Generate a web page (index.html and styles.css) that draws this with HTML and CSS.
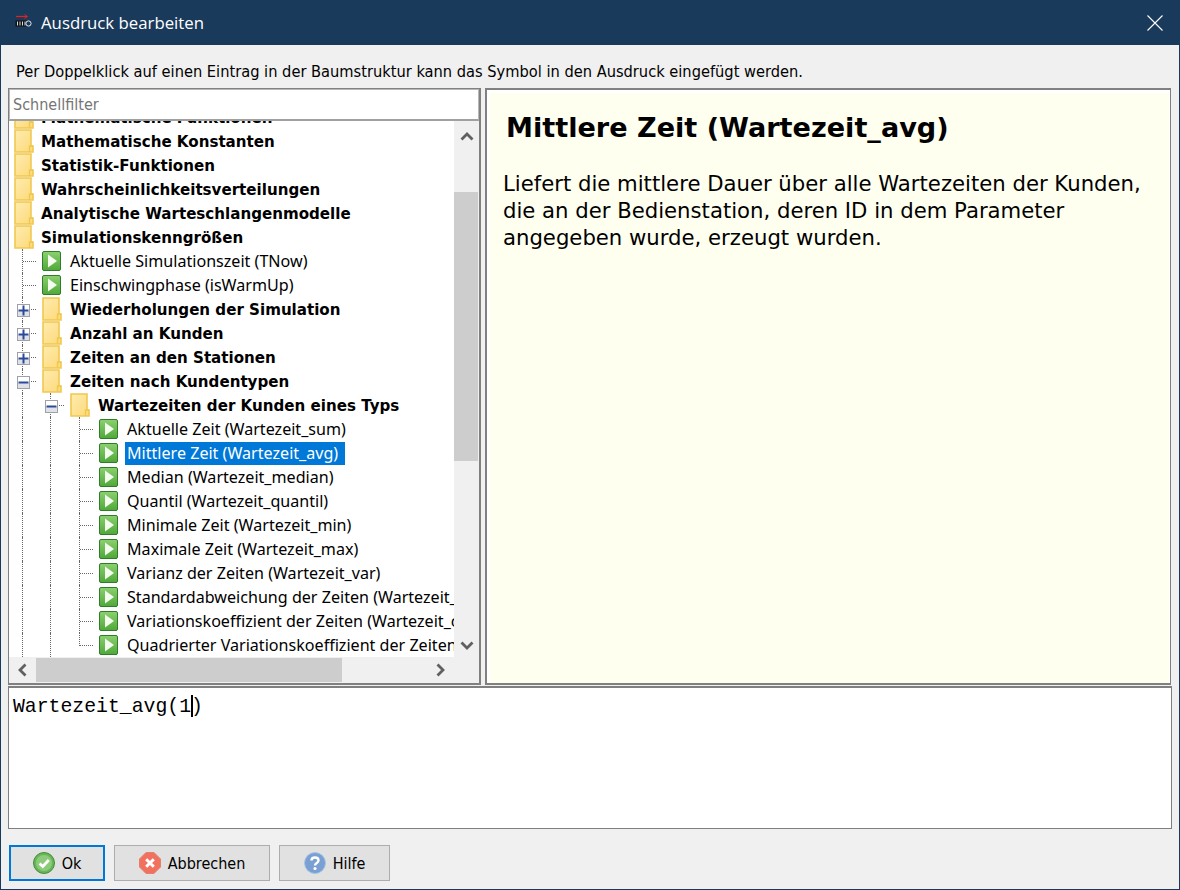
FILE: index.html
```html
<!DOCTYPE html>
<html lang="de">
<head>
    <meta charset="utf-8" />
    <title>Ausdruck bearbeiten</title>
    <link rel="stylesheet" href="styles.css">
</head>
<body>
    <svg class="defs" width="0" height="0">
        <defs>
            <linearGradient id="gelb" x1="0" y1="0" x2="1" y2="1">
                <stop offset="0" stop-color="#feecb0"/>
                <stop offset="1" stop-color="#fdd978"/>
            </linearGradient>
            <linearGradient id="gruen" x1="0" y1="0" x2="0" y2="1">
                <stop offset="0" stop-color="#8cd070"/>
                <stop offset="1" stop-color="#4fa838"/>
            </linearGradient>
            <symbol id="ordner" viewBox="0 0 20 24">
                <path d="M1 1H17V17H19V23H1Z" fill="url(#gelb)" stroke="#f0c850" stroke-width="1.6"/>
                <path d="M15.500 23V17H19" fill="none" stroke="#f0c850" stroke-width="1.4"/>
            </symbol>
            <symbol id="start" viewBox="0 0 20 20">
                <rect x="0.500" y="0.500" width="18" height="19" rx="1.500" fill="url(#gruen)" stroke="#2f7d2a"/>
                <path d="M6 3.500L15 10L6 16.500Z" fill="#f4fbef"/>
            </symbol>
            <symbol id="plus" viewBox="0 0 13 13">
                <rect x="0.500" y="0.500" width="12" height="12" fill="#fff" stroke="#a0a0a8"/>
                <rect x="1" y="7" width="11" height="5" fill="#dfe1e6"/>
                <path d="M1.500 6.500H11.500M6.500 1.500V11.500" stroke="#2b4a9a" stroke-width="2"/>
            </symbol>
            <symbol id="minus" viewBox="0 0 13 13">
                <rect x="0.500" y="0.500" width="12" height="12" fill="#fff" stroke="#a0a0a8"/>
                <rect x="1" y="7" width="11" height="5" fill="#dfe1e6"/>
                <path d="M1.500 6.500H11.500" stroke="#2b4a9a" stroke-width="2"/>
            </symbol>
        </defs>
    </svg>

    <div class="titel">
        <svg class="titel-icon" width="17" height="14" viewBox="0 0 17 14">
            <path d="M1 2.500H12" stroke="#e8201c" stroke-width="1.200"/>
            <path d="M9.500 0.500L12.500 2.500L9.500 4.500" fill="none" stroke="#e8201c"/>
            <path d="M0.500 6.500H11.500V12.500H0.500Z" fill="#111"/>
            <path d="M2.500 7.500V11.500M5 7.500V11.500M7.500 7.500V11.500M10 7.500V11.500" fill="none" stroke="#d8dde4"/>
            <circle cx="13.500" cy="9.500" r="2.600" fill="#1a3a5c" stroke="#e4e7ea"/>
        </svg>
        <span class="titel-text">Ausdruck bearbeiten</span>
        <svg class="schliessen" width="16" height="16" viewBox="0 0 16 16">
            <path d="M0.500 0.500L15.500 15.500M15.500 0.500L0.500 15.500" stroke="#fff" stroke-width="1.100"/>
        </svg>
    </div>

    <div class="hinweis">Per Doppelklick auf einen Eintrag in der Baumstruktur kann das Symbol in den Ausdruck eingefügt werden.</div>

    <div class="haupt">
        <div class="links">
            <div class="filter">Schnellfilter</div>
            <div class="baum-bereich">
                <div class="baum">
                    <div class="zeile wurzel"><svg class="ordner"><use href="#ordner"/></svg><span class="fett">Mathematische Funktionen</span></div>
                    <div class="zeile wurzel"><svg class="ordner"><use href="#ordner"/></svg><span class="fett">Mathematische Konstanten</span></div>
                    <div class="zeile wurzel"><svg class="ordner"><use href="#ordner"/></svg><span class="fett">Statistik-Funktionen</span></div>
                    <div class="zeile wurzel"><svg class="ordner"><use href="#ordner"/></svg><span class="fett">Wahrscheinlichkeitsverteilungen</span></div>
                    <div class="zeile wurzel"><svg class="ordner"><use href="#ordner"/></svg><span class="fett">Analytische Warteschlangenmodelle</span></div>
                    <div class="zeile wurzel"><svg class="ordner"><use href="#ordner"/></svg><span class="fett">Simulationskenngrößen</span></div>

                    <div class="zeile"><span class="ast"></span><svg class="start"><use href="#start"/></svg><span class="eintrag">Aktuelle Simulationszeit (TNow)</span></div>
                    <div class="zeile"><span class="ast"></span><svg class="start"><use href="#start"/></svg><span class="eintrag">Einschwingphase (isWarmUp)</span></div>
                    <div class="zeile"><span class="ast"><svg class="knoten"><use href="#plus"/></svg></span><svg class="ordner"><use href="#ordner"/></svg><span class="fett">Wiederholungen der Simulation</span></div>
                    <div class="zeile"><span class="ast"><svg class="knoten"><use href="#plus"/></svg></span><svg class="ordner"><use href="#ordner"/></svg><span class="fett">Anzahl an Kunden</span></div>
                    <div class="zeile"><span class="ast"><svg class="knoten"><use href="#plus"/></svg></span><svg class="ordner"><use href="#ordner"/></svg><span class="fett">Zeiten an den Stationen</span></div>
                    <div class="zeile"><span class="ast"><svg class="knoten"><use href="#minus"/></svg></span><svg class="ordner"><use href="#ordner"/></svg><span class="fett">Zeiten nach Kundentypen</span></div>

                    <div class="zeile"><span class="linie"></span><span class="ast"><svg class="knoten"><use href="#minus"/></svg></span><svg class="ordner"><use href="#ordner"/></svg><span class="fett">Wartezeiten der Kunden eines Typs</span></div>

                    <div class="zeile"><span class="linie"></span><span class="linie"></span><span class="ast"></span><svg class="start"><use href="#start"/></svg><span class="eintrag">Aktuelle Zeit (Wartezeit_sum)</span></div>
                    <div class="zeile"><span class="linie"></span><span class="linie"></span><span class="ast"></span><svg class="start"><use href="#start"/></svg><span class="eintrag aktiv">Mittlere Zeit (Wartezeit_avg)</span></div>
                    <div class="zeile"><span class="linie"></span><span class="linie"></span><span class="ast"></span><svg class="start"><use href="#start"/></svg><span class="eintrag">Median (Wartezeit_median)</span></div>
                    <div class="zeile"><span class="linie"></span><span class="linie"></span><span class="ast"></span><svg class="start"><use href="#start"/></svg><span class="eintrag">Quantil (Wartezeit_quantil)</span></div>
                    <div class="zeile"><span class="linie"></span><span class="linie"></span><span class="ast"></span><svg class="start"><use href="#start"/></svg><span class="eintrag">Minimale Zeit (Wartezeit_min)</span></div>
                    <div class="zeile"><span class="linie"></span><span class="linie"></span><span class="ast"></span><svg class="start"><use href="#start"/></svg><span class="eintrag">Maximale Zeit (Wartezeit_max)</span></div>
                    <div class="zeile"><span class="linie"></span><span class="linie"></span><span class="ast"></span><svg class="start"><use href="#start"/></svg><span class="eintrag">Varianz der Zeiten (Wartezeit_var)</span></div>
                    <div class="zeile"><span class="linie"></span><span class="linie"></span><span class="ast"></span><svg class="start"><use href="#start"/></svg><span class="eintrag">Standardabweichung der Zeiten (Wartezeit_std)</span></div>
                    <div class="zeile"><span class="linie"></span><span class="linie"></span><span class="ast"></span><svg class="start"><use href="#start"/></svg><span class="eintrag">Variationskoeffizient der Zeiten (Wartezeit_cv)</span></div>
                    <div class="zeile"><span class="linie"></span><span class="linie"></span><span class="ast ende"></span><svg class="start"><use href="#start"/></svg><span class="eintrag">Quadrierter Variationskoeffizient der Zeiten (Wartezeit_scv)</span></div>
                </div>
                <div class="vbar">
                    <div class="pfeil-v"><svg width="14" height="9" viewBox="0 0 14 9"><path d="M1.500 7.500L7 2L12.500 7.500" fill="none" stroke="#606060" stroke-width="2.800"/></svg></div>
                    <div class="vbar-griff"></div>
                    <div class="pfeil-v unten"><svg width="14" height="9" viewBox="0 0 14 9"><path d="M1.500 1.500L7 7L12.500 1.500" fill="none" stroke="#606060" stroke-width="2.800"/></svg></div>
                </div>
            </div>
            <div class="hbar">
                <div class="pfeil-h"><svg width="9" height="14" viewBox="0 0 9 14"><path d="M7.500 1.500L2 7L7.500 12.500" fill="none" stroke="#606060" stroke-width="2.800"/></svg></div>
                <div class="hbar-griff"></div>
                <div class="pfeil-h rechts"><svg width="9" height="14" viewBox="0 0 9 14"><path d="M1.500 1.500L7 7L1.500 12.500" fill="none" stroke="#606060" stroke-width="2.800"/></svg></div>
            </div>
        </div>

        <div class="rechts-aussen">
            <div class="beschreibung">
                <h2>Mittlere Zeit (Wartezeit_avg)</h2>
                <p>Liefert die mittlere Dauer über alle Wartezeiten der Kunden,<br>die an der Bedienstation, deren ID in dem Parameter<br>angegeben wurde, erzeugt wurden.</p>
            </div>
        </div>
    </div>

    <div class="editor">Wartezeit_avg(1<span class="cursor"></span>)</div>

    <div class="knoepfe">
        <button class="knopf standard">
            <svg width="22" height="22" viewBox="0 0 22 22">
                <circle cx="11" cy="11" r="10.500" fill="#69b558" stroke="#3f8f3a"/>
                <circle cx="11" cy="11" r="8" fill="#8ccb7a"/>
                <path d="M6.500 11.500L9.800 14.500L15.800 8" fill="none" stroke="#fff" stroke-width="2.800"/>
            </svg>
            Ok
        </button>
        <button class="knopf abbrechen">
            <svg width="22" height="22" viewBox="0 0 22 22">
                <path d="M7 0.500H15L21.500 7V15L15 21.500H7L0.500 15V7Z" fill="#f2705e" stroke="#e0806f"/>
                <path d="M7.200 7.200L14.800 14.800M14.800 7.200L7.200 14.800" stroke="#fff" stroke-width="3"/>
            </svg>
            Abbrechen
        </button>
        <button class="knopf hilfe">
            <svg width="22" height="22" viewBox="0 0 22 22">
                <circle cx="11" cy="11" r="10.500" fill="#7a9fd2" stroke="#a9c2e4"/>
                <path d="M7.500 8.500C7.500 4.500 14.500 4.500 14.500 8.500C14.500 11 11 11 11 13.500" fill="none" stroke="#fff" stroke-width="2.400"/>
                <circle cx="11" cy="16.500" r="1.600" fill="#fff"/>
            </svg>
            Hilfe
        </button>
    </div>
</body>
</html>
```

FILE: styles.css
```css
/* Fensterrahmen */
html, body {
    margin: 0;
    padding: 0;
}

body {
    width: 1180px;
    height: 890px;
    box-sizing: border-box;
    overflow: hidden;
    background-color: #f0f0f0;
    border: 1px solid #1a3a5c;
    border-top: none;
    font-family: "DejaVu Sans Condensed", "DejaVu Sans", sans-serif;
    font-size: 16px;
    color: #000;
    display: flex;
    flex-direction: column;
}

.defs {
    display: block;
    height: 0;
}

/* Titelleiste */
.titel {
    height: 45px;
    flex: none;
    background-color: #1a3a5c;
    color: #fff;
    display: flex;
    align-items: center;
    padding: 0 16px 0 14px;
}

.titel-icon {
    margin: 0 9px 3px 0;
}

.titel-text {
    flex: 1;
    font-family: "Open Sans", sans-serif;
    font-size: 16.800px;
}

.hinweis {
    height: 43px;
    flex: none;
    box-sizing: border-box;
    padding: 16px 0 0 15px;
    line-height: 22px;
    font-size: 16.270px;
}

/* Obere Hälfte */
.haupt {
    height: 597px;
    flex: none;
    display: flex;
    margin: 0 7px;
    gap: 4px;
}

.links {
    width: 473px;
    flex: none;
    box-sizing: border-box;
    border: 1px solid #808080;
    border-right-width: 2px;
    border-bottom-width: 2px;
    display: flex;
    flex-direction: column;
    background-color: #f0f0f0;
}

.filter {
    height: 32px;
    flex: none;
    box-sizing: border-box;
    background-color: #fff;
    border: 1px solid #b8b8b8;
    border-bottom: 2px solid #a0a0a0;
    padding-left: 3px;
    line-height: 30px;
    color: #757575;
}

.baum-bereich {
    height: 536px;
    flex: none;
    display: flex;
}

.baum {
    flex: 1;
    min-width: 0;
    overflow: hidden;
    background-color: #fff;
    padding-left: 13px;
}

.zeile {
    height: 24px;
    display: flex;
    align-items: center;
    white-space: nowrap;
}

.zeile:first-child {
    margin-top: -16px;
}

.wurzel {
    margin-left: -8px;
}

.wurzel .fett {
    margin-left: 7px;
}

.ordner {
    width: 20px;
    height: 24px;
    flex: none;
}

.start {
    width: 20px;
    height: 20px;
    flex: none;
}

.fett {
    font-family: "DejaVu Sans", sans-serif;
    font-weight: bold;
    font-size: 15.100px;
    line-height: 24px;
    padding-top: 1px;
    margin-left: 8px;
    color: #000;
}

.eintrag {
    margin-left: 6px;
    padding: 0 3px 0 2px;
    height: 23px;
    line-height: 23px;
    font-family: "Noto Sans", sans-serif;
    font-size: 16.100px;
}

.aktiv {
    padding-right: 7px;
    background-color: #0078d7;
    color: #fff;
}

/* Verbindungslinien im Baum */
.linie {
    width: 28px;
    height: 24px;
    flex: none;
    box-sizing: border-box;
    border-left: 1px dotted #666;
}

.linie + .linie {
    width: 29px;
}

.ast {
    position: relative;
    width: 20px;
    height: 24px;
    flex: none;
    box-sizing: border-box;
    border-left: 1px dotted #666;
    background-image: repeating-linear-gradient(90deg, #666 0 1px, transparent 1px 2px);
    background-repeat: no-repeat;
    background-size: 14px 1px;
    background-position: 0 12px;
}

.ast.ende {
    height: 13px;
    margin-bottom: 11px;
}

.knoten {
    position: absolute;
    left: -6px;
    top: 7px;
    width: 13px;
    height: 13px;
}

/* Rollbalken */
.vbar {
    width: 25px;
    flex: none;
    display: flex;
    flex-direction: column;
    background-color: #f0f0f0;
}

.pfeil-v {
    height: 30px;
    flex: none;
    display: flex;
    align-items: center;
    justify-content: center;
}

.vbar-griff {
    height: 269px;
    flex: none;
    margin: 41px 1px 0 0;
    background-color: #cdcdcd;
}

.pfeil-v.unten {
    height: 24px;
    margin-top: auto;
}

.hbar {
    height: 26px;
    flex: none;
    display: flex;
    align-items: center;
    background-color: #f0f0f0;
}

.pfeil-h {
    width: 27px;
    flex: none;
    display: flex;
    justify-content: center;
}

.hbar-griff {
    width: 306px;
    height: 24px;
    flex: none;
    background-color: #cdcdcd;
}

.pfeil-h.rechts {
    margin-left: 85px;
}

/* Beschreibung rechts */
.rechts-aussen {
    flex: 1;
    box-sizing: border-box;
    margin-right: 1px;
    border: 2px solid #808080;
    border-right-width: 1px;
    background-color: #fff;
    padding: 3px 1px 0 3px;
}

.beschreibung {
    height: 100%;
    box-sizing: border-box;
    background-color: #fffff0;
    padding: 17px 0 0 13px;
    font-family: "DejaVu Sans", sans-serif;
}

.beschreibung h2 {
    margin: 0 0 0 3px;
    font-size: 27.100px;
    line-height: 36px;
}

.beschreibung p {
    margin: 24px 0 0;
    font-size: 21.200px;
    line-height: 27px;
}

/* Ausdruck */
.editor {
    height: 143px;
    flex: none;
    box-sizing: border-box;
    margin: 1px 7px 0;
    border: 2px solid #808080;
    border-left-width: 1px;
    border-right-width: 1px;
    border-bottom-width: 1px;
    background-color: #fff;
    padding: 6px 0 0 4px;
    font-family: "Liberation Mono", monospace;
    font-size: 19.800px;
    line-height: 26px;
    white-space: pre;
}

.cursor {
    display: inline-block;
    width: 0;
    height: 22px;
    border-left: 2px solid #000;
    margin-right: -2px;
    vertical-align: -5px;
}

/* Knöpfe */
.knoepfe {
    flex: 1;
    display: flex;
    padding: 16px 0 0 8px;
    gap: 9px;
}

.knopf {
    height: 36px;
    box-sizing: border-box;
    display: flex;
    align-items: center;
    justify-content: center;
    gap: 7px;
    background-color: #e1e1e1;
    border: 1px solid #adadad;
    font-family: "DejaVu Sans Condensed", "DejaVu Sans", sans-serif;
    font-size: 16px;
    color: #000;
    padding: 0;
}

.standard {
    width: 96px;
    border: 2px solid #0078d7;
}

.abbrechen {
    width: 156px;
}

.hilfe {
    width: 111px;
}
```
